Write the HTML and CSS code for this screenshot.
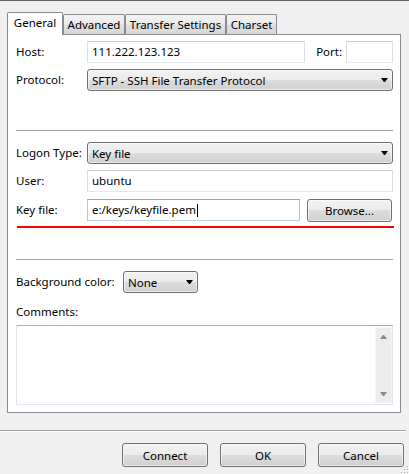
FILE: index.html
```html
<!DOCTYPE html>
<html lang="en">
<head>
<meta charset="utf-8">
<title>Site Manager</title>
<link rel="stylesheet" href="styles.css">
</head>
<body>
<div class="window">
  <div class="tabstrip">
    <div class="tab tab-active tab-general">General</div>
    <div class="tab tab-advanced">Advanced</div>
    <div class="tab tab-transfer">Transfer Settings</div>
    <div class="tab tab-charset">Charset</div>
  </div>

  <div class="panel">
    <div class="row">
      <span class="lbl">Host:</span>
      <div class="field field-host">111.222.123.123</div>
      <span class="lbl-port">Port:</span>
      <div class="field field-port"></div>
    </div>
    <div class="row">
      <span class="lbl">Protocol:</span>
      <div class="combo combo-wide"><span>SFTP - SSH File Transfer Protocol</span><i class="drop"></i></div>
    </div>

    <div class="sep sep-first"></div>

    <div class="row row-logon">
      <span class="lbl">Logon Type:</span>
      <div class="combo combo-wide"><span>Key file</span><i class="drop"></i></div>
    </div>
    <div class="row">
      <span class="lbl">User:</span>
      <div class="field field-wide">ubuntu</div>
    </div>
    <div class="row row-key">
      <span class="lbl">Key file:</span>
      <div class="field field-key field-focus">e:/keys/keyfile.pem<span class="caret"></span></div>
      <button class="btn btn-browse" type="button">Browse...</button>
    </div>
    <div class="underline"></div>

    <div class="sep sep-second"></div>

    <div class="row row-bg">
      <span class="lbl lbl-bg">Background color:</span>
      <div class="combo combo-small"><span>None</span><i class="drop"></i></div>
    </div>
    <div class="comments-lbl">Comments:</div>
    <div class="memo">
      <div class="memo-text"></div>
      <div class="vscroll">
        <i class="arrow-up"></i>
        <i class="arrow-down"></i>
      </div>
    </div>
  </div>

  <div class="footer-sep"></div>
  <div class="buttons">
    <button class="btn btn-dialog" type="button">Connect</button>
    <button class="btn btn-dialog" type="button">OK</button>
    <button class="btn btn-dialog" type="button">Cancel</button>
  </div>

  <svg class="grip" width="9" height="9" viewBox="0 0 9 9">
    <rect x="7" y="1" width="1" height="1" fill="#a7a7a7"/>
    <rect x="4" y="4" width="1" height="1" fill="#a7a7a7"/>
    <rect x="7" y="4" width="1" height="1" fill="#a7a7a7"/>
    <rect x="1" y="7" width="1" height="1" fill="#a7a7a7"/>
    <rect x="4" y="7" width="1" height="1" fill="#a7a7a7"/>
    <rect x="7" y="7" width="1" height="1" fill="#a7a7a7"/>
    <rect x="8" y="2" width="1" height="1" fill="#fff"/>
    <rect x="5" y="5" width="1" height="1" fill="#fff"/>
    <rect x="8" y="5" width="1" height="1" fill="#fff"/>
    <rect x="2" y="8" width="1" height="1" fill="#fff"/>
    <rect x="5" y="8" width="1" height="1" fill="#fff"/>
    <rect x="8" y="8" width="1" height="1" fill="#fff"/>
  </svg>
</div>
</body>
</html>
```

FILE: styles.css
```css
html, body {
  margin: 0;
  padding: 0;
  background: #f0f0f0;
}

body {
  font-family: "Noto Sans", "Open Sans", sans-serif;
  font-size: 11.5px;
  color: #000;
}

.window {
  position: relative;
  width: 409px;
  height: 474px;
  box-sizing: border-box;
  border-top: 1px solid #646464;
  overflow: hidden;
}

/* ---- tab strip ---- */
.tabstrip {
  position: relative;
  z-index: 1;
  display: flex;
  align-items: flex-end;
  height: 22px;
  margin: 11px 0 0 7px;
}

.tab {
  box-sizing: border-box;
  height: 20px;
  border: 1px solid #898c95;
  border-bottom: none;
  border-radius: 2px 2px 0 0;
  background: linear-gradient(#f3f3f3 0%, #ebebeb 45%, #dfdfdf 55%, #d8d8d8 100%);
  text-align: center;
  line-height: 19px;
  white-space: nowrap;
}

.tab-active {
  height: 23px;
  margin-bottom: -1px;
  background: #fff;
}

.tab-general  { width: 56px; }
.tab-advanced { width: 62px; }
.tab-transfer { width: 101px; }
.tab-charset  { width: 51px; }

/* ---- page panel ---- */
.panel {
  box-sizing: border-box;
  width: 394px;
  height: 379px;
  margin-left: 7px;
  border: 1px solid #898c95;
  background: #fff;
  padding: 6px 7px 7px 8px;
}

.row {
  display: flex;
  align-items: flex-start;
  height: 22px;
}

.row + .row { margin-top: 6px; }
.row-key { height: 23px; margin-top: 7px !important; }

.lbl {
  flex: none;
  width: 71px;
  line-height: 22px;
}

.lbl-bg { width: 107px; }

.lbl-port {
  flex: none;
  width: 30px;
  margin-left: 11px;
  line-height: 22px;
}

.field {
  box-sizing: border-box;
  height: 22px;
  padding: 0 4px;
  line-height: 20px;
  background: #fff;
  border: 1px solid;
  border-color: #c9ccd3 #dbdfe6 #e3e9ef #dbdfe6;
  white-space: nowrap;
}

.field-host { width: 219px; }
.field-port { width: 47px; }
.field-wide { width: 306px; }
.field-key  { width: 213px; }

.field-focus {
  border-color: #7ea6cf #a9c8e6 #b6d1ea #a9c8e6;
}

.caret {
  display: inline-block;
  width: 1px;
  height: 13px;
  margin-left: 1px;
  background: #000;
  vertical-align: -3px;
}

/* ---- drop-down boxes ---- */
.combo {
  box-sizing: border-box;
  display: flex;
  align-items: center;
  justify-content: space-between;
  height: 22px;
  padding: 0 4px 0 4px;
  border: 1px solid #707070;
  border-radius: 3px;
  background: linear-gradient(#f2f2f2 0%, #ebebeb 50%, #dddddd 50%, #cfcfcf 100%);
  box-shadow: inset 0 0 0 1px rgba(255, 255, 255, 0.55);
  white-space: nowrap;
}

.combo-wide  { width: 306px; }
.combo-small { width: 75px; }

.drop {
  flex: none;
  width: 1px;
  height: 0;
  border-top: 4px solid #000;
  border-left: 3px solid transparent;
  border-right: 3px solid transparent;
}

/* ---- separators ---- */
.sep {
  height: 0;
  border-top: 1px solid #a0a0a0;
  width: 377px;
}

.sep-first  { margin: 39px 0 11px; }
.sep-second { margin: 31px 0 11px; }

.row-logon { margin-top: 0; }

.underline {
  height: 2px;
  margin: 4px -1px 0 1px;
  background: #ff0000;
}

/* ---- buttons ---- */
.btn {
  box-sizing: border-box;
  margin: 0;
  padding: 0;
  font: inherit;
  color: #000;
  border: 1px solid #707070;
  border-radius: 3px;
  background: linear-gradient(#f2f2f2 0%, #ebebeb 50%, #dddddd 50%, #cfcfcf 100%);
  box-shadow: inset 0 0 0 1px rgba(255, 255, 255, 0.6);
  text-align: center;
}

.btn-browse {
  width: 85px;
  height: 23px;
  margin-left: 7px;
}

.btn-dialog {
  width: 86px;
  height: 24px;
}

/* ---- comments memo ---- */
.comments-lbl {
  margin-top: 11px;
  line-height: 16px;
}

.memo {
  box-sizing: border-box;
  display: flex;
  width: 377px;
  height: 80px;
  margin-top: 5px;
  border: 1px solid;
  border-color: #abadb3 #e2e3ea #e3e9ef #e2e3ea;
  background: #fff;
  padding: 1px 0 1px 0;
}

.memo-text { flex: 1; }

.vscroll {
  box-sizing: border-box;
  display: flex;
  flex-direction: column;
  justify-content: space-between;
  align-items: center;
  width: 17px;
  padding: 7px 0 6px;
  background: #ececec;
  border: 1px solid #f5f5f5;
}

.arrow-up,
.arrow-down {
  width: 1px;
  height: 0;
  border-left: 3px solid transparent;
  border-right: 3px solid transparent;
}

.arrow-up   { border-bottom: 4px solid #8a8a8a; }
.arrow-down { border-top: 4px solid #8a8a8a; }

/* ---- dialog footer ---- */
.footer-sep {
  height: 0;
  margin: 17px 3px 0 0;
  border-top: 1px solid #a0a0a0;
  border-bottom: 1px solid #fff;
}

.buttons {
  display: flex;
  justify-content: flex-end;
  gap: 12px;
  margin-top: 11px;
  padding-right: 5px;
}

.grip {
  position: absolute;
  right: 0;
  bottom: 0;
}
```
